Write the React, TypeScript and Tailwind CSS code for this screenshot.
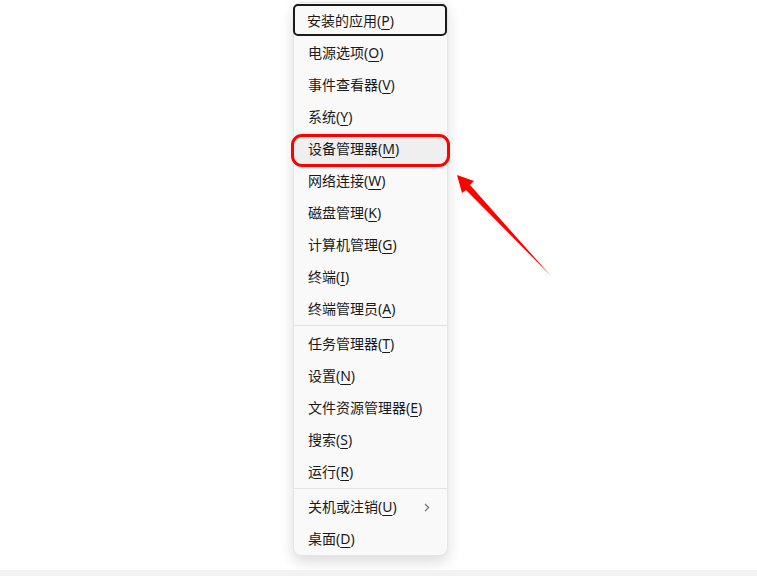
import React from "react";

type Item = { label: string; key: string; sub?: boolean };

const groups: Item[][] = [
  [
    { label: "安装的应用", key: "P" },
    { label: "电源选项", key: "O" },
    { label: "事件查看器", key: "V" },
    { label: "系统", key: "Y" },
    { label: "设备管理器", key: "M" },
    { label: "网络连接", key: "W" },
    { label: "磁盘管理", key: "K" },
    { label: "计算机管理", key: "G" },
    { label: "终端", key: "I" },
    { label: "终端管理员", key: "A" },
  ],
  [
    { label: "任务管理器", key: "T" },
    { label: "设置", key: "N" },
    { label: "文件资源管理器", key: "E" },
    { label: "搜索", key: "S" },
    { label: "运行", key: "R" },
  ],
  [
    { label: "关机或注销", key: "U", sub: true },
    { label: "桌面", key: "D" },
  ],
];

function Row({ item }: { item: Item }) {
  const focused = item.key === "P";
  const marked = item.key === "M";
  let cls = "relative h-[32px] flex items-center justify-between pr-[17px] pt-[2px] ";
  if (focused) cls += "border-2 border-[#1b1b1b] rounded-[5px] pl-[12px] -ml-px";
  else if (marked) cls += "bg-[#efefef] rounded-[5px] pl-[14px]";
  else cls += "pl-[14px]";
  return (
    <div className={cls}>
      <span className="text-[14px] text-[#1a1a1a] leading-none whitespace-nowrap">
        {item.label}(
        <span className="underline underline-offset-[3px] decoration-1">{item.key}</span>)
      </span>
      {item.sub && (
        <svg width="6" height="9" viewBox="0 0 6 9" className="text-[#666]">
          <path d="M1 0.8 L4.6 4.5 L1 8.2" fill="none" stroke="currentColor" strokeWidth="1.1" />
        </svg>
      )}
      {marked && (
        <div className="absolute -left-[3px] -right-[3px] top-[2px] -bottom-[3px] border-[3px] border-[#ff0000] rounded-[11px]" />
      )}
    </div>
  );
}

export default function App() {
  return (
    <div
      className="relative w-[757px] h-[576px] bg-white flex flex-col overflow-hidden"
      style={{ fontFamily: '"Noto Sans", "Noto Sans CJK SC", sans-serif' }}
    >
      <div className="flex-1 pl-[293px] pt-[2px]">
        <div className="w-[155px] bg-[#f9f9f9] border border-[#e6e6e6] rounded-[8px] shadow-[0_6px_14px_rgba(0,0,0,0.14)] pt-[1px] pb-[1px]">
          {groups.map((g, gi) => (
            <div key={gi}>
              {gi > 0 && <div className="h-px bg-[#e3e3e3] my-[1px]" />}
              {g.map((it) => (
                <Row key={it.key} item={it} />
              ))}
            </div>
          ))}
        </div>
      </div>
      <div className="h-[6px] bg-[#f2f2f2]" />
      <svg
        className="absolute left-[450px] top-[170px]"
        width="110"
        height="112"
        viewBox="0 0 110 112"
      >
        <polygon points="7,5 24,11 20,15 101,106 16,20 12,23" fill="#ff0000" />
      </svg>
    </div>
  );
}
